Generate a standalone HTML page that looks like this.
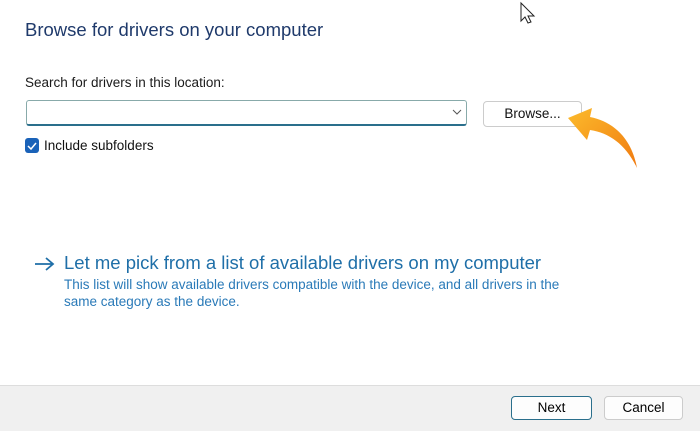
<!DOCTYPE html><html><head><style>
body{margin:0;width:700px;height:430px;background:#fff;font-family:"Liberation Sans",sans-serif;position:relative;overflow:hidden}
.a{position:absolute;white-space:nowrap}
</style></head><body>
<div class="a" style="left:25px;top:19px;font-size:18.5px;color:#1f3a6b">Browse for drivers on your computer</div>
<div class="a" style="left:25px;top:75px;font-size:13.5px;color:#1a1a1a">Search for drivers in this location:</div>
<div class="a" style="left:26px;top:100px;width:441px;border:1px solid #8aa;border-bottom:2px solid #2a6f8c;border-radius:3px;box-sizing:border-box;height:26px"></div>
<svg class="a" style="left:452px;top:108px" width="10" height="8"><path d="M1 2l4 4 4-4" stroke="#555" fill="none"/></svg>
<div class="a" style="left:483px;top:101px;width:99px;height:26px;border:1px solid #ccc;border-radius:4px;box-sizing:border-box;font-size:13.5px;text-align:center;line-height:24px;color:#111">Browse...</div>
<div class="a" style="left:25px;top:138px;width:14px;height:15px;background:#1a62b8;border-radius:3px"></div>
<svg class="a" style="left:25px;top:138px" width="14" height="15"><path d="M3 8l3 3 5-6" stroke="#fff" stroke-width="1.5" fill="none"/></svg>
<div class="a" style="left:44px;top:138px;font-size:13.5px;color:#111">Include subfolders</div>
<svg class="a" style="left:560px;top:100px" width="85" height="72"><defs><linearGradient id="g" x1="0" y1="0" x2="1" y2="1"><stop offset="0" stop-color="#fcbb2c"/><stop offset="1" stop-color="#f07a10"/></linearGradient></defs><path d="M8 18L32 8 30 17C55 22 72 40 77 68 66 45 50 33 30 30L27 40Z" fill="url(#g)"/></svg>
<svg class="a" style="left:519px;top:1px" width="18" height="24"><path d="M2 2v18l4-4 3 6 3-1-3-6h6z" fill="#fff" stroke="#222"/></svg>
<svg class="a" style="left:34px;top:256px" width="22" height="16"><path d="M1 8h18M12 2l7 6-7 6" stroke="#1f6fa8" stroke-width="1.8" fill="none"/></svg>
<div class="a" style="left:64px;top:252px;font-size:18.5px;color:#1f6fa8">Let me pick from a list of available drivers on my computer</div>
<div class="a" style="left:64px;top:276px;font-size:13.5px;color:#2a7ab8;line-height:17px">This list will show available drivers compatible with the device, and all drivers in the<br>same category as the device.</div>
<div class="a" style="left:0;top:385px;width:700px;height:45px;background:#f0f0f0;border-top:1px solid #ddd"></div>
<div class="a" style="left:511px;top:396px;width:81px;height:24px;border:1px solid #2a6f8c;border-radius:4px;box-sizing:border-box;background:#fdfdfd;font-size:13.5px;text-align:center;line-height:22px">Next</div>
<div class="a" style="left:604px;top:396px;width:79px;height:24px;border:1px solid #ccc;border-radius:4px;box-sizing:border-box;background:#fdfdfd;font-size:13.5px;text-align:center;line-height:22px">Cancel</div>
</body></html>
